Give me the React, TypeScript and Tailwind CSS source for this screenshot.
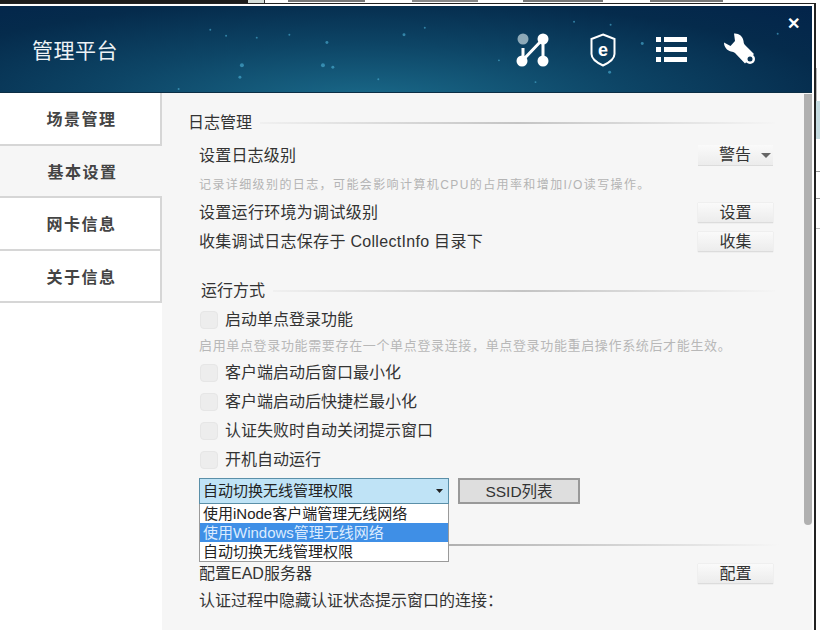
import type { ReactNode } from 'react';

const font = "font-['Liberation_Sans','Noto_Sans_CJK_SC',sans-serif]";

const tabs = ['场景管理', '基本设置', '网卡信息', '关于信息'];

function SectionTitle({ children, width }: { children: ReactNode; width: string }) {
  return (
    <div className="flex h-5 items-center gap-2">
      <span className="shrink-0 whitespace-nowrap text-[16px] leading-5 text-[#333]">{children}</span>
      <div className={`h-[2px] ${width} bg-gradient-to-r from-[#f0f0f0] via-[#c4c4c4] to-[#f5f5f5]`} />
    </div>
  );
}

function SideButton({ children }: { children: ReactNode }) {
  return (
    <button className="h-5 w-[75px] border-b border-[#dcdcdc] bg-gradient-to-b from-[#fafafa] to-[#ececec] text-[16px] leading-5 text-[#333] shadow-[0_0_1px_#ccc]">
      {children}
    </button>
  );
}

function CheckRow({ label }: { label: string }) {
  return (
    <div className="flex h-[29px] items-center gap-[7px] pl-[38px]">
      <span className="size-[18px] rounded-sm border border-[#e6e6e6] bg-[#ededed]" />
      <span className="whitespace-nowrap text-[16px] leading-5 text-[#333]">{label}</span>
    </div>
  );
}

function Stars() {
  return (
    <svg className="absolute inset-0 size-full" viewBox="0 0 812 87">
      {[
        [240, 60, 2], [322, 60, 2], [332, 62, 1.5], [238, 72, 1.5], [326, 37, 1.5], [404, 29, 1.5],
        [224, 30, 1], [208, 24, 1], [255, 32, 1], [288, 29, 1], [378, 74, 1], [176, 84, 1],
        [576, 16, 1], [613, 19, 1], [645, 38, 1.5], [612, 67, 1.5], [500, 55, 1], [537, 77, 1],
        [782, 28, 1], [63, 50, 0.8], [425, 22, 1],
      ].map(([x, y, r]) => (
        <circle key={`${x}-${y}`} cx={x} cy={y} r={r} fill="#4fb4d8" opacity="0.6" />
      ))}
    </svg>
  );
}

function NodeIcon() {
  return (
    <svg width="34" height="34" viewBox="0 0 34 34" fill="none" className="shrink-0">
      <circle cx="7" cy="6" r="5.5" fill="#b9cdd6" opacity="0.75" />
      <path d="M7 15v10M6 28L27 6M27 6v22" stroke="#fff" strokeWidth="3" />
      <circle cx="27" cy="6" r="5.5" fill="#fff" />
      <circle cx="6" cy="28" r="5.5" fill="#fff" />
      <circle cx="27" cy="28" r="5.5" fill="#fff" />
    </svg>
  );
}

function ShieldIcon() {
  return (
    <svg width="26" height="34" viewBox="0 0 26 34" fill="none" className="shrink-0">
      <path d="M13 1.500l11.500 4.500v15c0 4.500-5 8.500-11.500 11.500C6.500 29.500 1.500 25.500 1.500 21V6z" stroke="#fff" strokeWidth="2" />
      <text x="13" y="22.500" textAnchor="middle" fontSize="18" fontWeight="700" fill="#fff" fontFamily="Liberation Sans">
        e
      </text>
    </svg>
  );
}

function ListIcon() {
  return (
    <svg width="31" height="25" viewBox="0 0 31 25" fill="#fff" className="shrink-0">
      <rect x="0" y="0" width="5" height="5" />
      <rect x="8" y="0" width="23" height="5" />
      <rect x="0" y="10" width="5" height="5" />
      <rect x="8" y="10" width="23" height="5" />
      <rect x="0" y="20" width="5" height="5" />
      <rect x="8" y="20" width="23" height="5" />
    </svg>
  );
}

function WrenchIcon() {
  return (
    <svg width="33" height="33" viewBox="0 0 33 33" fill="none" className="shrink-0">
      <path
        d="M10 .5C14.500 0 19 3 19.500 8c.2 1.500.2 2.500 1.500 4L30 21l-9 9.500-10-10.500c-1-1-2.500-1-4-1.500C3 17.500 0 14 0 9.500L6.500 13 11 8z"
        fill="#fff"
      />
      <circle cx="26" cy="26" r="5" fill="#fff" />
      <circle cx="26" cy="26" r="2.500" fill="#0a3557" />
    </svg>
  );
}

export default function App() {
  return (
    <div className={`${font} flex h-[630px] w-[820px] flex-col overflow-hidden bg-white`}>
      {/* Window behind the dialog, only its bottom edge shows */}
      <div className="flex h-[3px] shrink-0 items-start bg-white">
        <div className="h-full w-[248px] bg-[#1c1c1c]" />
        <div className="h-full w-[17px] border-r border-[#333] bg-[#d5ddd8]" />
        <div className="ml-[23px] h-[2px] w-[77px] bg-[#777]" />
        <div className="ml-[47px] h-[2px] w-[66px] bg-[#888]" />
        <div className="ml-[45px] h-[2px] w-[80px] bg-[#777]" />
        <div className="ml-[47px] h-[2px] w-[73px] bg-[#777]" />
      </div>

      <div className="flex min-h-0 flex-1">
        <div className="flex w-[816px] flex-col border-r-2 border-t border-[#222]">
          <div className="flex min-h-0 flex-1 flex-col border-r-2 border-t-2 border-white bg-[#f6f6f6]">
            {/* Header */}
            <header className="relative flex h-[87px] shrink-0 items-center border-b border-[#0b2e45] bg-[radial-gradient(ellipse_at_45%_110%,#1a6a8a_0%,#0d4566_42%,#052b4c_76%,#03244a_100%)]">
              <Stars />
              <span className="relative ml-[32px] mt-[4px] text-[21px] tracking-[0.5px] text-[#eef3f6]">管理平台</span>
              <div className="relative ml-auto mr-[55px] mt-[1px] flex items-center gap-[40px]">
                <NodeIcon />
                <ShieldIcon />
                <ListIcon />
                <div className="-ml-[3px]">
                  <WrenchIcon />
                </div>
              </div>
              <span className="absolute right-[12px] top-[10px] text-[16px] font-bold leading-4 text-white">✕</span>
            </header>

            <div className="flex min-h-0 flex-1">
              {/* Side tabs */}
              <nav className="w-[162px] shrink-0 bg-white">
                {tabs.map((tab, i) => (
                  <div
                    key={tab}
                    className={`flex h-[52.5px] items-center justify-center border-b-2 border-[#d6d6d6] pl-[3px] pt-[4px] text-[16px] font-bold tracking-[1.5px] text-[#444] ${
                      i === 1 ? 'bg-[#f6f6f6]' : 'border-r-2 bg-white'
                    }`}
                  >
                    {tab}
                  </div>
                ))}
              </nav>

              {/* Settings content */}
              <main className="relative min-w-0 flex-1 pt-[20px]">
                <div className="pl-[26px]">
                  <SectionTitle width="w-[515px]">日志管理</SectionTitle>
                </div>

                <div className="mr-[39px] mt-[12px] flex items-center justify-between pl-[37px]">
                  <span className="text-[16px] leading-5 tracking-[0.2px] text-[#333]">设置日志级别</span>
                  <button className="flex h-[21px] w-[75px] items-center justify-end gap-[10px] border-b border-[#dcdcdc] bg-gradient-to-b from-[#fafafa] to-[#ececec] pr-[2px] text-[16px] leading-5 text-[#333]">
                    警告
                    <svg width="10" height="5" viewBox="0 0 10 5">
                      <path d="M0 0h10L5 5z" fill="#666" />
                    </svg>
                  </button>
                </div>
                <p className="mt-[11px] whitespace-nowrap pl-[37px] text-[12px] leading-4 tracking-[1.4px] text-[#b4b4b4]">
                  记录详细级别的日志，可能会影响计算机CPU的占用率和增加I/O读写操作。
                </p>
                <div className="mr-[39px] mt-[10px] flex items-center justify-between pl-[37px]">
                  <span className="text-[16px] leading-5 tracking-[0.3px] text-[#333]">设置运行环境为调试级别</span>
                  <SideButton>设置</SideButton>
                </div>
                <div className="mr-[39px] mt-[9px] flex items-center justify-between pl-[37px]">
                  <span className="text-[16px] leading-5 tracking-[0.3px] text-[#333]">收集调试日志保存于 CollectInfo 目录下</span>
                  <SideButton>收集</SideButton>
                </div>

                <div className="mt-[29px] pl-[39px]">
                  <SectionTitle width="w-[502px]">运行方式</SectionTitle>
                </div>

                <div className="mt-[4px]">
                  <CheckRow label="启动单点登录功能" />
                  <p className="whitespace-nowrap pl-[37px] text-[13px] leading-[24px] tracking-[0.65px] text-[#b8b8b8]">
                    启用单点登录功能需要存在一个单点登录连接，单点登录功能重启操作系统后才能生效。
                  </p>
                  <CheckRow label="客户端启动后窗口最小化" />
                  <CheckRow label="客户端启动后快捷栏最小化" />
                  <CheckRow label="认证失败时自动关闭提示窗口" />
                  <CheckRow label="开机自动运行" />
                </div>

                {/* Dropdown */}
                <div className="mt-[4px] flex items-start gap-[10px] pl-[37px]">
                  <div className="w-[250px]">
                    <div className="flex h-[26px] items-center justify-between border border-[#5a8fa8] bg-[#bfe3f6] pl-[3px] pr-[5px] text-[15px] text-[#222]">
                      自动切换无线管理权限
                      <svg width="7" height="4" viewBox="0 0 7 4">
                        <path d="M0 0h7L3.500 4z" fill="#222" />
                      </svg>
                    </div>
                    <ul className="border border-t-0 border-[#9a9a9a] bg-white text-[15px] leading-[19px] text-[#222]">
                      <li className="pl-[3px]">使用iNode客户端管理无线网络</li>
                      <li className="bg-[#3f8fe6] pl-[3px] text-[#dcecff]">使用Windows管理无线网络</li>
                      <li className="pl-[3px]">自动切换无线管理权限</li>
                    </ul>
                  </div>
                  <button className="-ml-[1px] h-[26px] w-[122px] border-2 border-[#999] bg-[#dedede] text-[15.500px] text-[#333]">
                    SSID列表
                  </button>
                </div>

                <div className="absolute left-[287px] top-[451px] h-[2px] w-[330px] bg-gradient-to-r from-[#b0b0b0] to-[#f6f6f6]" />

                <div className="mr-[39px] mt-[2px] flex items-center justify-between pl-[37px]">
                  <span className="text-[16px] leading-5 text-[#333]">配置EAD服务器</span>
                  <SideButton>配置</SideButton>
                </div>
                <p className="mt-[7px] whitespace-nowrap pl-[37px] text-[16px] leading-5 text-[#333]">认证过程中隐藏认证状态提示窗口的连接：</p>

                {/* Scrollbar */}
                <div className="absolute right-0 top-px h-[431px] w-2 rounded-b bg-[#b0b0b0]" />
              </main>
            </div>
          </div>
        </div>

        {/* Sliver of the table behind the dialog */}
        <div className="flex flex-1 flex-col">
          <div className="h-[65px]" />
          <div className="h-[33px] border-l border-[#bbb]" />
          <div className="h-[38px] bg-[#c5dbe0]" />
          <div className="h-[33px] border-b border-[#999]" />
          <div className="h-[27px] border-b border-[#999]" />
          <div className="h-[30px] border-b border-[#bbb]" />
        </div>
      </div>
    </div>
  );
}
